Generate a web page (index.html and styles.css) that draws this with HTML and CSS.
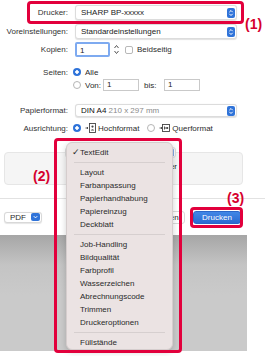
FILE: index.html
```html
<!DOCTYPE html>
<html lang="de">
<head>
<meta charset="utf-8">
<link rel="stylesheet" href="styles.css">
</head>
<body>
<div class="dialog">
  <div class="row r1">
    <span class="lbl">Drucker:</span>
    <div class="popup"><span class="ptext">SHARP BP-xxxxx</span>
      <svg class="chev" width="8" height="10" viewBox="0 0 8 10"><rect width="8" height="10" rx="2" fill="#2f73d9"/><path d="M2.3 4.2 L4 2.5 L5.7 4.2 M2.3 5.8 L4 7.5 L5.7 5.8" stroke="#fff" fill="none" stroke-width="1"/></svg>
    </div>
  </div>
  <div class="row r2">
    <span class="lbl">Voreinstellungen:</span>
    <div class="popup"><span class="ptext">Standardeinstellungen</span>
      <svg class="chev" width="8" height="10" viewBox="0 0 8 10"><rect width="8" height="10" rx="2" fill="#2f73d9"/><path d="M2.3 4.2 L4 2.5 L5.7 4.2 M2.3 5.8 L4 7.5 L5.7 5.8" stroke="#fff" fill="none" stroke-width="1"/></svg>
    </div>
  </div>
  <div class="row r3">
    <span class="lbl">Kopien:</span>
    <div class="ctl">
      <div class="field focus">1</div>
      <svg class="stepper" width="7" height="13" viewBox="0 0 7 13"><path d="M1.5 5 L3.5 2.5 L5.5 5 M1.5 8 L3.5 10.5 L5.5 8" stroke="#555" fill="none" stroke-width="1"/></svg>
      <span class="check"></span><span class="txt">Beidseitig</span>
    </div>
  </div>
  <div class="row r4">
    <span class="lbl">Seiten:</span>
    <div class="ctl"><span class="radio on"></span><span class="txt">Alle</span></div>
  </div>
  <div class="row r5">
    <span class="lbl"></span>
    <div class="ctl">
      <span class="radio"></span><span class="txt von">Von:</span>
      <div class="field small">1</div>
      <span class="txt bis">bis:</span>
      <div class="field small">1</div>
    </div>
  </div>
  <div class="row r6">
    <span class="lbl">Papierformat:</span>
    <div class="popup"><span class="ptext"><b>DIN A4</b> <span class="grey">210 x 297 mm</span></span>
      <svg class="chev" width="8" height="10" viewBox="0 0 8 10"><rect width="8" height="10" rx="2" fill="#2f73d9"/><path d="M2.3 4.2 L4 2.5 L5.7 4.2 M2.3 5.8 L4 7.5 L5.7 5.8" stroke="#fff" fill="none" stroke-width="1"/></svg>
    </div>
  </div>
  <div class="row r7">
    <span class="lbl">Ausrichtung:</span>
    <div class="ctl">
      <span class="radio on"></span>
      <svg class="orient" width="11" height="10" viewBox="0 0 11 10"><path d="M0.5 5 H3 M2 4 L3 5 L2 6" stroke="#444" fill="none" stroke-width="0.9"/><rect x="4.5" y="0.5" width="6" height="9" fill="#fff" stroke="#444" stroke-width="0.9"/><circle cx="7.5" cy="3.6" r="1.1" fill="#444"/><path d="M5.8 7.6 Q7.5 4.8 9.2 7.6 Z" fill="#444"/></svg>
      <span class="txt">Hochformat</span>
      <span class="radio r-q"></span>
      <svg class="orient" width="11" height="10" viewBox="0 0 11 10"><path d="M0.5 5 H3 M2 4 L3 5 L2 6" stroke="#444" fill="none" stroke-width="0.9"/><rect x="3.5" y="1.5" width="7" height="7" fill="#fff" stroke="#444" stroke-width="0.9"/><path d="M5.5 3.5 V6.5 M5.5 5 H8.5" stroke="#444" stroke-width="0.9"/><circle cx="8.3" cy="5" r="1" fill="#444"/></svg>
      <span class="txt">Querformat</span>
    </div>
  </div>
  <div class="panel">
    <div class="panel-popup"><svg class="chev" width="8" height="10" viewBox="0 0 8 10"><rect width="8" height="10" rx="2" fill="#2f73d9"/></svg></div>
    <div class="panel-line">Druckränder</div>
  </div>
  <div class="sep"></div>
  <div class="bottom">
    <div class="pdf">PDF
      <svg width="9" height="8" viewBox="0 0 9 8"><rect width="9" height="8" rx="2" fill="#2f73d9"/><path d="M2.8 3.2 L4.5 4.9 L6.2 3.2" stroke="#fff" fill="none" stroke-width="1"/></svg>
    </div>
    <div class="spacer"></div>
    <div class="btn cancel">Abbrechen</div>
    <div class="btn print">Drucken</div>
  </div>
  <div class="preview"></div>
</div>

<div class="menu">
  <div class="item"><span class="ck">✓</span>TextEdit</div>
  <div class="msep"></div>
  <div class="item">Layout</div>
  <div class="item">Farbanpassung</div>
  <div class="item">Papierhandhabung</div>
  <div class="item">Papiereinzug</div>
  <div class="item">Deckblatt</div>
  <div class="msep"></div>
  <div class="item">Job-Handling</div>
  <div class="item">Bildqualität</div>
  <div class="item">Farbprofil</div>
  <div class="item">Wasserzeichen</div>
  <div class="item">Abrechnungscode</div>
  <div class="item">Trimmen</div>
  <div class="item">Druckeroptionen</div>
  <div class="msep"></div>
  <div class="item">Füllstände</div>
</div>

<div class="mark m1"></div>
<div class="mark m2"></div>
<div class="mark m3"></div>
<div class="num n1">(1)</div>
<div class="num n2">(2)</div>
<div class="num n3">(3)</div>
</body>
</html>
```

FILE: styles.css
```css
* { box-sizing: border-box; margin: 0; padding: 0; }
html, body { width: 265px; height: 356px; }
body {
  margin: 0;
  overflow: hidden;
  background: #fff;
  font-family: "Liberation Sans", Arial, sans-serif;
  font-size: 8px;
  color: #2b2b2b;
  position: relative;
}
.dialog { width: 265px; padding-top: 5px; }
.row { display: flex; align-items: center; }
.lbl { width: 68px; flex: none; text-align: right; color: #333; }
.ctl { display: flex; align-items: center; margin-left: 5px; }
.popup {
  margin-left: 7px;
  width: 162px;
  height: 100%;
  background: #fff;
  border: 1px solid #dcdcdc;
  border-radius: 3px;
  box-shadow: 0 0.5px 1px rgba(0,0,0,0.12);
  display: flex;
  align-items: center;
  padding-left: 5px;
  padding-right: 1px;
}
.ptext { flex: 1; color: #222; }
.ptext b { font-weight: normal; color: #111; }
.grey { color: #8a8a8a; }
.chev { flex: none; display: block; }
.r1 { height: 15px; }
.r2 { height: 15px; margin-top: 4px; }
.r3 { height: 15px; margin-top: 3px; }
.r4 { height: 12px; margin-top: 9px; }
.r5 { height: 12px; margin-top: 1px; }
.r6 { height: 13px; margin-top: 13px; }
.r7 { height: 12px; margin-top: 5px; }
.field {
  background: #fff;
  border: 1px solid #c9c9c9;
  height: 12px;
  line-height: 10px;
  padding-left: 3px;
  color: #222;
}
.field.focus {
  margin-left: 2px;
  width: 35px;
  height: 15px;
  line-height: 13px;
  border: 2px solid #7eaaf0;
  border-radius: 2px;
}
.field.small { width: 36px; }
.stepper { margin-left: 3px; display: block; }
.check {
  width: 8px; height: 8px;
  margin-left: 5px;
  border: 1px solid #b8b8b8;
  border-radius: 2px;
  background: #fff;
}
.txt { margin-left: 4px; color: #2b2b2b; }
.radio {
  width: 8px; height: 8px; flex: none;
  border: 1px solid #b5b5b5;
  border-radius: 50%;
  background: #fff;
}
.radio.on {
  border: none;
  background: radial-gradient(circle, #fff 0 1.5px, #2f73d9 1.9px);
}
.von { margin-left: 4px; width: 18px; }
.bis { margin-left: 5px; width: 20px; }
.orient { margin-left: 4px; display: block; }
.r-q { margin-left: 8px; }
.r7 .orient + .txt { margin-left: 2px; }

.panel {
  position: relative;
  margin-top: 18px;
  margin-left: 4px;
  width: 239px;
  height: 33px;
  background: #f5f5f5;
  border: 1px solid #e6e6e6;
  border-radius: 4px;
}
.panel-popup {
  position: absolute;
  left: 60px; top: -6px;
  width: 111px; height: 11px;
  background: #fff;
  border: 1px solid #dcdcdc;
  border-radius: 3px;
  display: flex; align-items: center; justify-content: flex-end;
  padding-right: 1px;
}
.panel-popup .chev { height: 9px; }
.panel-line { padding-top: 9px; padding-left: 128px; color: #2b2b2b; }
.sep { margin-top: 13px; height: 1px; background: #e2e2e2; }
.bottom {
  display: flex;
  align-items: center;
  margin-top: 11px;
  height: 14px;
  padding-left: 4px;
  padding-right: 24px;
}
.pdf {
  display: flex; align-items: center; gap: 5px;
  height: 11px;
  padding: 0 1px 0 5px;
  background: #fff;
  border: 1px solid #d8d8d8;
  border-radius: 3px;
  box-shadow: 0 0.5px 1px rgba(0,0,0,0.1);
}
.pdf svg { display: block; }
.spacer { flex: 1; }
.btn {
  height: 13px;
  line-height: 12px;
  border-radius: 3px;
  text-align: center;
}
.cancel {
  width: 46px;
  background: #fff;
  border: 1px solid #d8d8d8;
  margin-right: 8px;
  text-align: right;
  padding-right: 7px;
}
.print {
  width: 48px;
  color: #fff;
  background: linear-gradient(#4187e6, #2a6bd2);
  border: 1px solid #2a66c8;
}
.preview {
  margin-top: 11px;
  width: 247px;
  height: 116px;
  background: linear-gradient(#a6a6a6 0, #c4c4c4 30px, #cacaca 60px, #cacaca 100%);
}

.menu {
  position: absolute;
  left: 66px; top: 142px;
  width: 107px; height: 208px;
  background: #ebe3e3;
  border: 1px solid #d5cdcd;
  border-radius: 6px;
  box-shadow: 0 2px 6px rgba(0,0,0,0.18);
  padding-top: 3px;
}
.item {
  height: 13px;
  line-height: 13px;
  padding-left: 13px;
  color: #2a2a2a;
  position: relative;
  white-space: nowrap;
}
.ck { position: absolute; left: 5px; top: 0; font-family: "DejaVu Sans", sans-serif; font-size: 9px; }
.msep { height: 7px; display: flex; align-items: center; padding: 0 7px; }
.msep::before { content: ""; flex: 1; height: 1px; background: #d6cfcf; }

.mark {
  position: absolute;
  border: 3px solid #e2003c;
  border-radius: 4px;
}
.m1 { left: 27px; top: 1px; width: 217px; height: 23px; }
.m2 { left: 54px; top: 138px; width: 128px; height: 215px; }
.m3 { left: 190px; top: 207px; width: 53px; height: 21px; }
.num {
  position: absolute;
  color: #d6002e;
  font-weight: bold;
  font-size: 14px;
  line-height: 14px;
}
.n1 { left: 245px; top: 17px; }
.n2 { left: 33px; top: 169px; }
.n3 { left: 227px; top: 191px; }
```
